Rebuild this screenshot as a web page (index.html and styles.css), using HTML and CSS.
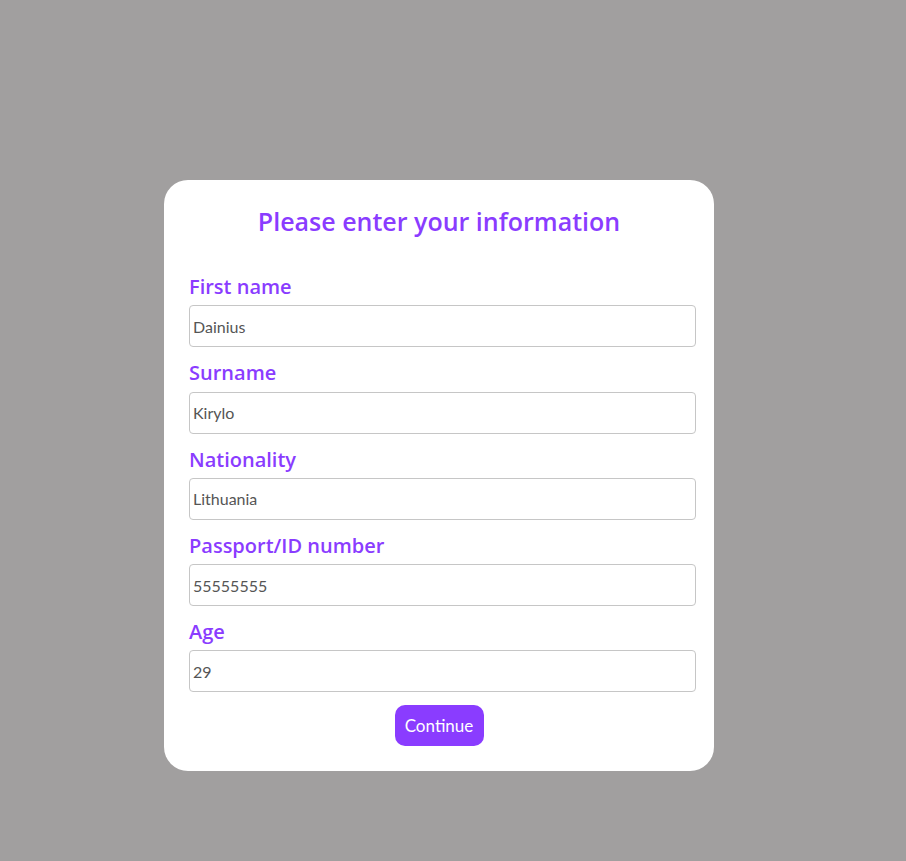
FILE: index.html
```html
<!DOCTYPE html>
<html>
<head>
<meta charset="utf-8">
<link rel="stylesheet" href="styles.css">
</head>
<body>
<div class="card">
  <h1 class="title">Please enter your information</h1>
  <form class="form">
    <div class="field">
      <label class="label">First name</label>
      <input class="input" type="text" value="Dainius">
    </div>
    <div class="field">
      <label class="label">Surname</label>
      <input class="input" type="text" value="Kirylo">
    </div>
    <div class="field">
      <label class="label">Nationality</label>
      <input class="input" type="text" value="Lithuania">
    </div>
    <div class="field">
      <label class="label">Passport/ID number</label>
      <input class="input" type="text" value="55555555">
    </div>
    <div class="field">
      <label class="label">Age</label>
      <input class="input" type="text" value="29">
    </div>
    <div class="actions">
      <button type="button" class="button">Continue</button>
    </div>
  </form>
</div>
</body>
</html>
```
FILE: styles.css
```css
html, body {
  margin: 0;
  padding: 0;
}
body {
  background: #a19f9f;
  font-family: Lato, "Open Sans", sans-serif;
  height: 861px;
  overflow: hidden;
}
.card {
  width: 550px;
  box-sizing: border-box;
  margin: 180px 0 0 164px;
  background: #ffffff;
  border-radius: 24px;
  padding: 26px 18px 25px 25px;
}
.title {
  margin: 0 0 39px -7px;
  text-align: center;
  font-family: "Open Sans", Lato, sans-serif;
  font-size: 25px;
  line-height: 30px;
  font-weight: 600;
  color: #8a3cff;
}
.form {
  display: flex;
  flex-direction: column;
  gap: 14px;
}
.field {
  display: flex;
  flex-direction: column;
  gap: 6px;
}
.label {
  font-family: "Open Sans", Lato, sans-serif;
  font-size: 20px;
  line-height: 24.25px;
  font-weight: 600;
  color: #8a3cff;
}
.input {
  box-sizing: border-box;
  width: 507px;
  height: 42px;
  margin: 0;
  padding: 0 3px;
  border: 1px solid #c6c6c6;
  border-radius: 4px;
  font-family: Lato, "Open Sans", sans-serif;
  font-size: 16px;
  color: #555555;
  background: #fff;
}
.actions {
  display: flex;
  justify-content: center;
  margin-top: -1px;
}
.button {
  width: 89px;
  height: 41px;
  border: none;
  border-radius: 10px;
  background: #8a3cff;
  color: #fff;
  font-family: Lato, "Open Sans", sans-serif;
  font-size: 17px;
  padding: 0;
  margin-left: -7px;
}
```
